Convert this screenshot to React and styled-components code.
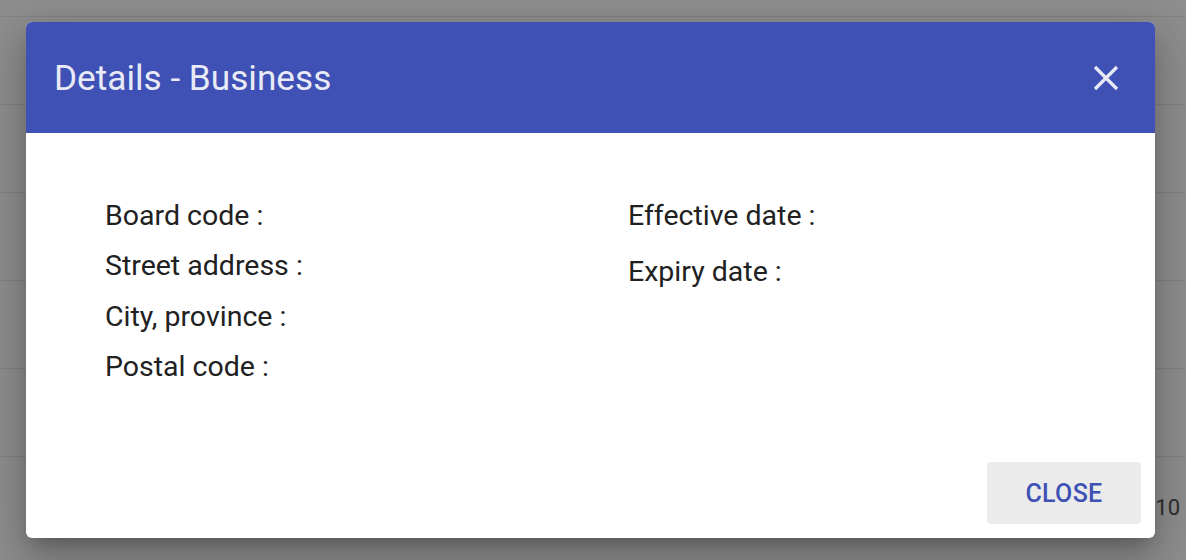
import React from "react";
import styled, { createGlobalStyle } from "styled-components";

const Global = createGlobalStyle`
  html, body { margin: 0; padding: 0; }
  body {
    width: 1186px;
    height: 560px;
    overflow: hidden;
    background: #8e8e8e;
    font-family: Roboto, "Noto Sans", Arial, sans-serif;
  }
`;

const Page = styled.div`
  position: relative;
  width: 1186px;
  height: 560px;
  overflow: hidden;
`;

const Table = styled.div`
  display: flex;
  flex-direction: column;
  padding-top: 16px;
`;

const Row = styled.div`
  height: 73px;
  padding: 14px 6px 0 0;
  border-top: 1px solid #828282;
  display: flex;
  align-items: center;
  justify-content: flex-end;
  font-size: 22px;
  color: #2e2e2e;
  box-sizing: content-box;
`;

const Overlay = styled.div`
  position: absolute;
  inset: 0;
`;

const Dialog = styled.div`
  position: absolute;
  left: 26px;
  top: 22px;
  width: 1129px;
  height: 516px;
  background: #fff;
  border-radius: 6px;
  overflow: hidden;
  display: flex;
  flex-direction: column;
  box-shadow: 0 11px 15px -7px rgba(0,0,0,0.2), 0 24px 38px 3px rgba(0,0,0,0.14), 0 9px 46px 8px rgba(0,0,0,0.12);
`;

const Header = styled.div`
  height: 111px;
  background: #3f51b5;
  display: flex;
  align-items: center;
  justify-content: space-between;
  padding: 0 33px 0 28px;
  flex-shrink: 0;
`;

const Title = styled.h2`
  margin: 0;
  font-size: 35.2px;
  font-weight: 400;
  color: #e8eaf6;
  letter-spacing: 0;
`;

const IconButton = styled.button`
  background: none;
  border: 0;
  padding: 0;
  width: 32px;
  height: 32px;
  display: flex;
  align-items: center;
  justify-content: center;
  cursor: pointer;
`;

const Body = styled.div`
  flex: 1;
  display: grid;
  grid-template-columns: 523px 1fr;
  padding: 63px 24px 0 79px;
`;

const Column = styled.div`
  display: flex;
  flex-direction: column;
  gap: ${p => p.$gap}px;
`;

const Label = styled.div`
  font-size: 28.5px;
  line-height: 40px;
  color: #212121;
`;

const Footer = styled.div`
  display: flex;
  justify-content: flex-end;
  padding: 0 14px 14px 0;
`;

const CloseButton = styled.button`
  width: 154px;
  height: 62px;
  border: 0;
  border-radius: 4px;
  background: #ebebeb;
  color: #3f51b5;
  font-family: Roboto, Arial, sans-serif;
  font-size: 25px;
  font-weight: 500;
  letter-spacing: 0.3px;
  cursor: pointer;
`;

export default function App() {
  return (
    <Page>
      <Global />
      <Table>
        <Row />
        <Row />
        <Row />
        <Row />
        <Row />
        <Row>10</Row>
      </Table>
      <Overlay>
        <Dialog>
          <Header>
            <Title>Details - Business</Title>
            <IconButton aria-label="close">
              <svg width="26" height="26" viewBox="0 0 26 26">
                <path d="M2 2 L24 24 M24 2 L2 24" stroke="#e8eaf6" strokeWidth="3.2" strokeLinecap="butt" />
              </svg>
            </IconButton>
          </Header>
          <Body>
            <Column $gap={10.3}>
              <Label>Board code :</Label>
              <Label>Street address :</Label>
              <Label>City, province :</Label>
              <Label>Postal code :</Label>
            </Column>
            <Column $gap={16}>
              <Label>Effective date :</Label>
              <Label>Expiry date :</Label>
            </Column>
          </Body>
          <Footer>
            <CloseButton>CLOSE</CloseButton>
          </Footer>
        </Dialog>
      </Overlay>
    </Page>
  );
}
